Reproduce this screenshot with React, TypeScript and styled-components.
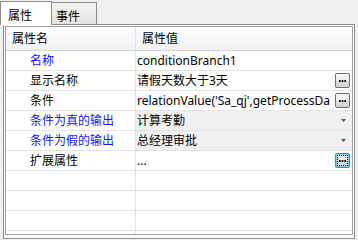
import React from "react";
import styled, { createGlobalStyle } from "styled-components";

type Prop = {
  name: string;
  value: string;
  blue?: boolean;
  kind?: "text" | "ellipsis" | "dropdown";
  focused?: boolean;
};

const props: Prop[] = [
  { name: "名称", value: "conditionBranch1", blue: true },
  { name: "显示名称", value: "请假天数大于3天", kind: "ellipsis" },
  { name: "条件", value: "relationValue('Sa_qj',getProcessDa", kind: "ellipsis" },
  { name: "条件为真的输出", value: "计算考勤", blue: true, kind: "dropdown" },
  { name: "条件为假的输出", value: "总经理审批", blue: true, kind: "dropdown" },
  { name: "扩展属性", value: "...", kind: "ellipsis", focused: true },
];

const GlobalStyle = createGlobalStyle`
  body {
    margin: 0;
    background: #f0f0f0;
    font-family: "Noto Sans", "Noto Sans CJK SC", sans-serif;
    font-size: 12px;
    color: #000;
  }
`;

export default function App() {
  const emptyRows = Array.from({ length: 4 });

  return (
    <>
      <GlobalStyle />
      <Window>
        <TabStrip>
          <Tab $active>属性</Tab>
          <Tab>事件</Tab>
        </TabStrip>
        <Panel>
          <Grid>
            <Header>
              <HeaderCell $divider>属性名</HeaderCell>
              <HeaderCell>属性值</HeaderCell>
            </Header>
            {props.map((p) => (
              <Row key={p.name}>
                <NameCell $blue={p.blue}>{p.name}</NameCell>
                <ValueCell $dropdown={p.kind === "dropdown"}>
                  <ValueText>{p.value}</ValueText>
                  {p.kind === "ellipsis" && (
                    <EllipsisButton $focused={p.focused}>
                      <svg width="7" height="2" viewBox="0 0 7 2">
                        <rect x="0" y="0" width="1.6" height="2" fill="#000" />
                        <rect x="2.7" y="0" width="1.6" height="2" fill="#000" />
                        <rect x="5.4" y="0" width="1.6" height="2" fill="#000" />
                      </svg>
                    </EllipsisButton>
                  )}
                  {p.kind === "dropdown" && (
                    <Arrow>
                      <svg width="5" height="3" viewBox="0 0 5 3">
                        <path d="M0 0h5L2.5 3z" fill="#555" />
                      </svg>
                    </Arrow>
                  )}
                </ValueCell>
              </Row>
            ))}
            {emptyRows.map((_, i) => (
              <Row key={i}>
                <NameCell />
                <ValueCell />
              </Row>
            ))}
          </Grid>
        </Panel>
      </Window>
    </>
  );
}

const Window = styled.div`
  width: 358px;
  height: 240px;
  overflow: hidden;
  background: #f0f0f0;
`;

const TabStrip = styled.div`
  display: flex;
  align-items: flex-end;
  height: 24px;
`;

const Tab = styled.div<{ $active?: boolean }>`
  box-sizing: border-box;
  position: relative;
  border: 1px solid #898c95;
  border-bottom: 0;
  ${(p) =>
    p.$active
      ? `
    width: 52px;
    height: 24px;
    margin-bottom: -1px;
    z-index: 1;
    background: #fff;
    padding: 4px 0 0 7px;
  `
      : `
    width: 45px;
    height: 22px;
    border-left: 0;
    background: linear-gradient(#f3f3f3, #e4e4e4);
    padding: 4px 0 0 4px;
  `}
`;

const Panel = styled.div`
  box-sizing: border-box;
  margin-left: 3px;
  width: 352px;
  height: 215px;
  border: 1px solid #898c95;
  background: #fff;
  padding: 1px 1px 3px 1px;
`;

const Grid = styled.div`
  box-sizing: border-box;
  height: 100%;
  border: 1px solid #a0a0a0;
  overflow: hidden;
`;

const Header = styled.div`
  display: grid;
  grid-template-columns: 130px 1fr;
  height: 24px;
  box-sizing: border-box;
  border-bottom: 1px solid #d5d5d5;
  background: linear-gradient(#fcfcfc, #f1f2f4);
`;

const HeaderCell = styled.div<{ $divider?: boolean }>`
  box-sizing: border-box;
  padding-left: 6px;
  line-height: 23px;
  ${(p) => p.$divider && "border-right: 1px solid #e2e2e2;"}
`;

const Row = styled.div`
  display: grid;
  grid-template-columns: 130px 1fr;
  height: 20px;
  box-sizing: border-box;
  border-bottom: 1px solid #e3e3e3;
`;

const NameCell = styled.div<{ $blue?: boolean }>`
  box-sizing: border-box;
  padding-left: 24px;
  line-height: 19px;
  border-right: 1px solid #e3e3e3;
  color: ${(p) => (p.$blue ? "#1515f0" : "#000")};
  white-space: nowrap;
`;

const ValueCell = styled.div<{ $dropdown?: boolean }>`
  display: flex;
  align-items: center;
  min-width: 0;
  padding-left: 1px;
  background: ${(p) => (p.$dropdown ? "#f0f0f0" : "#fff")};
`;

const ValueText = styled.span`
  flex: 1;
  min-width: 0;
  overflow: hidden;
  white-space: nowrap;
  line-height: 19px;
`;

const EllipsisButton = styled.div<{ $focused?: boolean }>`
  box-sizing: border-box;
  flex: none;
  position: relative;
  width: 15px;
  height: 15px;
  margin-right: 2px;
  border: 1px solid ${(p) => (p.$focused ? "#2b8fd6" : "#707070")};
  border-radius: 2px;
  background: linear-gradient(#f7f7f7 0%, #ececec 50%, #dcdcdc 51%, #d4d4d4 100%);
  display: flex;
  align-items: center;
  justify-content: center;
  padding-top: 1px;

  ${(p) =>
    p.$focused &&
    `
    box-shadow: inset 0 0 0 1px #7ccaf2;
    &::after {
      content: "";
      position: absolute;
      inset: 1px;
      border: 1px dotted #000;
    }
  `}
`;

const Arrow = styled.div`
  flex: none;
  display: flex;
  margin-right: 6px;
`;
